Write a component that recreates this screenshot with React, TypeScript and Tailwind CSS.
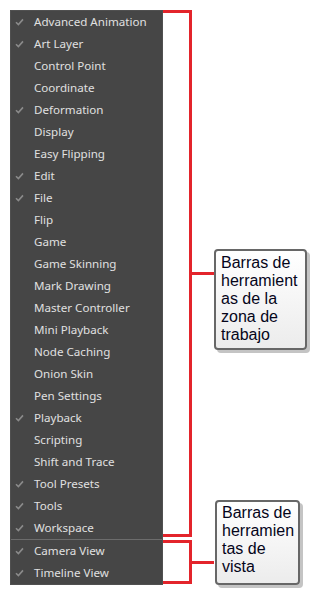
const items: { label: string; checked: boolean }[] = [
  { label: 'Advanced Animation', checked: true },
  { label: 'Art Layer', checked: true },
  { label: 'Control Point', checked: false },
  { label: 'Coordinate', checked: false },
  { label: 'Deformation', checked: true },
  { label: 'Display', checked: false },
  { label: 'Easy Flipping', checked: false },
  { label: 'Edit', checked: true },
  { label: 'File', checked: true },
  { label: 'Flip', checked: false },
  { label: 'Game', checked: false },
  { label: 'Game Skinning', checked: false },
  { label: 'Mark Drawing', checked: false },
  { label: 'Master Controller', checked: false },
  { label: 'Mini Playback', checked: false },
  { label: 'Node Caching', checked: false },
  { label: 'Onion Skin', checked: false },
  { label: 'Pen Settings', checked: false },
  { label: 'Playback', checked: true },
  { label: 'Scripting', checked: false },
  { label: 'Shift and Trace', checked: false },
  { label: 'Tool Presets', checked: true },
  { label: 'Tools', checked: true },
  { label: 'Workspace', checked: true },
];

const viewItems = [
  { label: 'Camera View', checked: true },
  { label: 'Timeline View', checked: true },
];

function Check() {
  return (
    <svg width="9" height="8" viewBox="0 0 9 8" className="shrink-0">
      <path d="M1 4.2 L3.4 6.6 L8 1.4" fill="none" stroke="#8a8a8a" strokeWidth="1.6" />
    </svg>
  );
}

function MenuRow({ label, checked }: { label: string; checked: boolean }) {
  return (
    <div className="flex h-[22px] items-center">
      <div className="flex w-[23px] justify-end pr-[10px]">{checked && <Check />}</div>
      <span className="text-[11.6px] leading-none text-[#e0e0e0]">{label}</span>
    </div>
  );
}

function Callout({ lines, className }: { lines: string[]; className: string }) {
  return (
    <div
      className={`rounded-[4px] border-2 border-[#676767] bg-gradient-to-b from-white to-[#ececec] pl-[5px] text-[16px] leading-[18px] text-[#05051a] shadow-[3px_3px_0_#c4c4c4] ${className}`}
      style={{ fontFamily: '"Liberation Sans", Arial, sans-serif' }}
    >
      {lines.map((l) => (
        <div key={l}>{l}</div>
      ))}
    </div>
  );
}

export default function App() {
  return (
    <div className="flex h-[595px] w-[321px] bg-white pl-[10px] pt-[10px]">
      <div
        className="flex h-[575px] w-[153px] flex-col border border-[#505050] bg-[#464646]"
        style={{ fontFamily: '"Noto Sans", "Open Sans", sans-serif' }}
      >
        <div>
          {items.map((it) => (
            <MenuRow key={it.label} {...it} />
          ))}
        </div>
        <div className="h-px bg-[#6c6c6c]" />
        <div>
          {viewItems.map((it) => (
            <MenuRow key={it.label} {...it} />
          ))}
        </div>
      </div>

      <div className="flex flex-col">
        <div className="flex h-[527px] items-center">
          <div className="h-full w-[29px] border-y-[3px] border-r-[3px] border-[#e3242b]" />
          <div className="h-[3px] w-[22px] bg-[#e3242b]" />
        </div>
        <div className="mt-[3px] flex h-[44px] items-center">
          <div className="h-full w-[29px] border-y-[3px] border-r-[3px] border-[#e3242b]" />
          <div className="h-[3px] w-[22px] bg-[#e3242b]" />
        </div>
      </div>

      <div className="flex flex-col">
        <Callout
          lines={['Barras de', 'herramient', 'as de la', 'zona de', 'trabajo']}
          className="mt-[239px] h-[101px] w-[93px] pt-[3px]"
        />
        <Callout
          lines={['Barras de', 'herramien', 'tas de', 'vista']}
          className="ml-px mt-[150px] h-[85px] w-[85px] pt-[2px]"
        />
      </div>
    </div>
  );
}
